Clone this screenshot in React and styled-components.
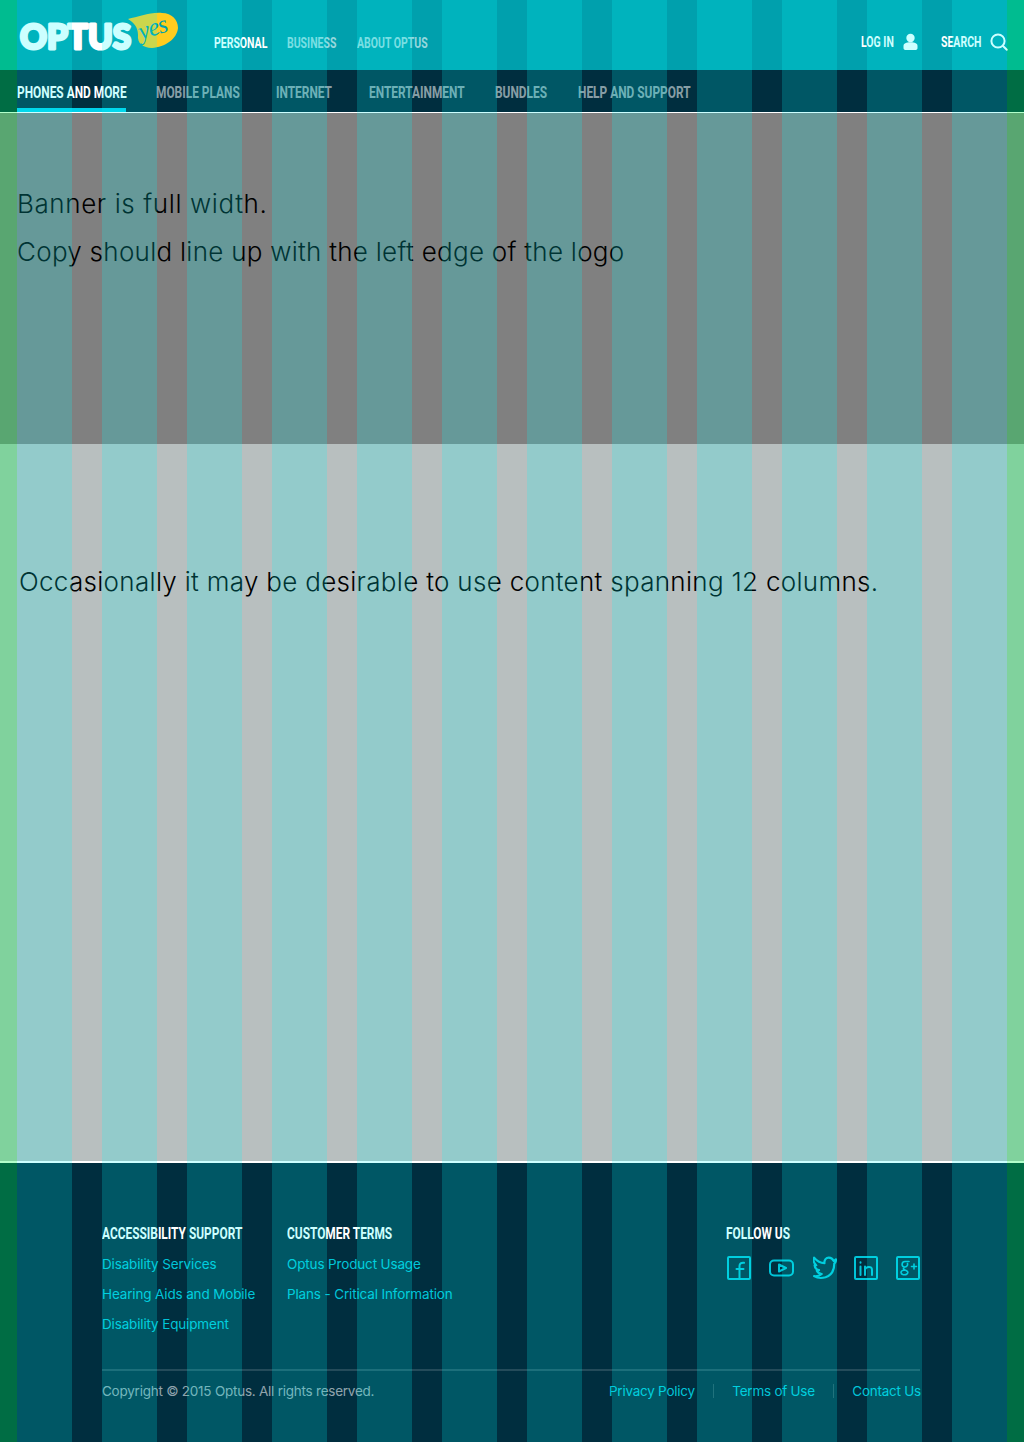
import React from "react";
import styled, { createGlobalStyle } from "styled-components";

const Global = createGlobalStyle`
  html, body { margin: 0; padding: 0; background: #b8bfbf; }
  * { box-sizing: border-box; }
`;
const label = `"Roboto", "Liberation Sans", sans-serif`;
const copy = `"Inter", "Noto Sans", "Liberation Sans", sans-serif`;

const Page = styled.div`
  position: relative;
  width: 1024px;
  height: 1442px;
  overflow: hidden;
  display: flex;
  flex-direction: column;
  color: #000;
`;
const Overlay = styled.div`
  position: absolute;
  inset: 0;
  display: flex;
  justify-content: space-between;
  pointer-events: none;
`;
const OuterMargin = styled.div`
  width: 17px;
  background: rgba(0, 255, 80, 0.3);
`;
const GridColumns = styled.div`
  display: grid;
  grid-template-columns: repeat(12, 55px);
  column-gap: 30px;
`;
const GridColumn = styled.div`
  background: rgba(0, 255, 255, 0.2);
`;
const Condensed = styled.span`
  display: inline-block;
  white-space: nowrap;
  transform: scaleX(0.7);
  transform-origin: 0 50%;
`;

const Header = styled.header`
  height: 70px;
  background: #00a0ad;
  display: flex;
  align-items: flex-start;
  padding-left: 17px;
`;
const Logo = styled.svg`
  width: 165px;
  height: 52px;
  margin-top: 9px;
  flex: none;
`;
const UtilNav = styled.nav`
  display: grid;
  grid-template-columns: 73px 70px 90px;
  margin: 34px 0 0 32px;
`;
const UtilLink = styled.a`
  font: 700 15px/18px ${label};
  color: ${(p) => (p.$active ? "#fff" : "rgba(255,255,255,.6)")};
`;
const Tools = styled.div`
  margin-left: auto;
  display: flex;
  align-items: center;
  padding: 30px 16px 0 0;
  height: 54px;
`;
const Tool = styled.a`
  font: 700 15px/18px ${label};
  color: #fff;
  display: flex;
  align-items: center;
  width: ${(p) => p.$w}px;
  justify-content: space-between;
  margin-left: ${(p) => p.$ml || 0}px;
`;
const ToolLabel = styled(Condensed)`
  width: 40px;
`;

const MainNav = styled.nav`
  height: 43px;
  background: #002e3f;
  border-bottom: 1px solid #fff;
  padding-left: 17px;
  display: grid;
  grid-template-columns: 139px 120px 93px 126px 83px 120px;
`;
const MainLink = styled.a`
  font: 700 17px/44px ${label};
  height: 42px;
  color: ${(p) => (p.$active ? "#fff" : "rgba(255,255,255,.55)")};
`;
const ActiveRule = styled.span`
  display: block;
  width: 109px;
  height: 4px;
  margin-top: -6px;
  position: relative;
  background: #00cfe8;
`;

const Banner = styled.section`
  height: 331px;
  background: #808080;
  padding: 67px 0 0 17px;
`;
const BannerLine = styled.p`
  margin: 0;
  font: 300 26px/48px ${copy};
  letter-spacing: ${(p) => p.$spacing}px;
`;
const Main = styled.main`
  height: 719px;
  padding: 118px 0 0 19px;
  border-bottom: 2px solid #fff;
`;
const MainLine = styled.p`
  margin: 0;
  font: 300 26px/40px ${copy};
  letter-spacing: 0.3px;
`;

const Footer = styled.footer`
  flex: 1;
  background: #002e3f;
  padding: 60px 104px 0 102px;
`;
const FooterCols = styled.div`
  display: grid;
  grid-template-columns: 185px 439px 1fr;
  height: 146px;
`;
const FooterHeading = styled.h4`
  margin: 0 0 6px;
  font: 700 17px/20px ${label};
  color: #fff;
`;
const FooterLink = styled.a`
  display: block;
  font: 400 13.5px/30px ${copy};
  letter-spacing: -0.15px;
  color: #00c4d8;
  white-space: nowrap;
`;
const Socials = styled.div`
  display: flex;
  justify-content: space-between;
  margin: 13px 0 0 1px;
`;
const Bottom = styled.div`
  border-top: 2px solid rgba(255, 255, 255, 0.14);
  display: flex;
  justify-content: space-between;
  padding-top: 6px;
`;
const Copyright = styled.span`
  font: 400 13.5px/28px ${copy};
  letter-spacing: -0.24px;
  color: rgba(255, 255, 255, 0.58);
`;
const Legal = styled.div`
  display: flex;
  width: 312px;
  margin-right: -1px;
  justify-content: space-between;
  align-items: center;
`;
const LegalLink = styled.a`
  font: 400 13.5px/28px ${copy};
  letter-spacing: -0.25px;
  color: #00c4d8;
  white-space: nowrap;
`;
const Separator = styled.span`
  width: 1px;
  height: 14px;
  background: rgba(255, 255, 255, 0.16);
`;

const Icon = styled.svg`
  width: ${(p) => p.$w || 24}px;
  height: ${(p) => p.$h || 24}px;
  fill: none;
  stroke: #00c4d8;
  stroke-width: 2;
  stroke-linecap: round;
  stroke-linejoin: round;
  flex: none;
`;

const cols = Array.from({ length: 12 });

export default function App() {
  return (
    <Page>
      <Global />
      <Header>
        <Logo viewBox="17 9 165 52">
          <path d="M128 19 C138 17 150 12 162 13 C172 13 178 20 178 28 C177 39 165 47 152 48 C143 48 137 43 138 35 C138 27 134 23 128 19 Z" fill="#ffcc1e" />
          <text x="141" y="40" fontFamily="Liberation Serif, serif" fontStyle="italic" fontSize="25" fill="#00a0ad" transform="rotate(-18 141 40)" textLength="30">yes</text>
          <text x="20" y="49" fontFamily="Lato, Inter, sans-serif" fontWeight="900" fontSize="34" fill="#fff" stroke="#fff" strokeWidth="3" strokeLinejoin="round" textLength="111" lengthAdjust="spacingAndGlyphs">OPTUS</text>
        </Logo>
        <UtilNav>
          <UtilLink $active><Condensed>PERSONAL</Condensed></UtilLink>
          <UtilLink><Condensed>BUSINESS</Condensed></UtilLink>
          <UtilLink><Condensed>ABOUT OPTUS</Condensed></UtilLink>
        </UtilNav>
        <Tools>
          <Tool $w={57}>
            <ToolLabel>LOG IN</ToolLabel>
            <svg width="15" height="18" viewBox="0 0 15 18" fill="#fff">
              <circle cx="7.5" cy="5" r="4.2" />
              <path d="M0.5 13 C0.5 10.5 3 9.3 7.5 9.3 C12 9.3 14.5 10.5 14.5 13 L14.5 15 C14.5 16.5 13.5 17 12 17 L3 17 C1.5 17 0.5 16.5 0.5 15 Z" />
            </svg>
          </Tool>
          <Tool $w={67} $ml={23}>
            <ToolLabel>SEARCH</ToolLabel>
            <svg width="18" height="18" viewBox="0 0 18 18" fill="none" stroke="#fff" strokeWidth="2" strokeLinecap="round">
              <circle cx="8" cy="8" r="6.6" />
              <path d="M13 13 L16.8 16.8" />
            </svg>
          </Tool>
        </Tools>
      </Header>
      <MainNav>
        <MainLink $active>
          <Condensed>PHONES AND MORE</Condensed>
          <ActiveRule />
        </MainLink>
        <MainLink><Condensed>MOBILE PLANS</Condensed></MainLink>
        <MainLink><Condensed>INTERNET</Condensed></MainLink>
        <MainLink><Condensed>ENTERTAINMENT</Condensed></MainLink>
        <MainLink><Condensed>BUNDLES</Condensed></MainLink>
        <MainLink><Condensed>HELP AND SUPPORT</Condensed></MainLink>
      </MainNav>
      <Banner>
        <BannerLine $spacing={0.6}>Banner is full width.</BannerLine>
        <BannerLine $spacing={0.27}>Copy should line up with the left edge of the logo</BannerLine>
      </Banner>
      <Main>
        <MainLine>Occasionally it may be desirable to use content spanning 12 columns.</MainLine>
      </Main>
      <Footer>
        <FooterCols>
          <div>
            <FooterHeading><Condensed>ACCESSIBILITY SUPPORT</Condensed></FooterHeading>
            <FooterLink>Disability Services</FooterLink>
            <FooterLink>Hearing Aids and Mobile</FooterLink>
            <FooterLink>Disability Equipment</FooterLink>
          </div>
          <div>
            <FooterHeading><Condensed>CUSTOMER TERMS</Condensed></FooterHeading>
            <FooterLink>Optus Product Usage</FooterLink>
            <FooterLink>Plans - Critical Information</FooterLink>
          </div>
          <div>
            <FooterHeading><Condensed>FOLLOW US</Condensed></FooterHeading>
            <Socials>
              <Icon viewBox="0 0 24 24">
                <rect x="1" y="1" width="22" height="22" rx="1" />
                <path d="M12.5 23 L12.5 10 C12.5 7.5 14 6.5 17 6.8 M9.5 13 L16.5 13" />
              </Icon>
              <Icon viewBox="0 0 26 24" $w={26}>
                <rect x="1" y="4.5" width="23" height="15" rx="4" />
                <path d="M10 8.5 L17 12 L10 15.5 Z" />
              </Icon>
              <Icon viewBox="1 2 22 22">
                <path d="M22 5 C21 5.8 20.5 6.2 20 6.5 C19 4.5 17.5 3.5 15.5 3.5 C13 3.5 11.2 5.5 11.5 8.5 C8 8.5 4.5 6.5 2 3.5 C1 6 2 9 4 10.5 L2.5 10.5 C2.8 13 4.5 14.5 6.5 15 L4.5 15.5 C5.5 17.5 7 18.3 9 18.5 C7 20.2 4.5 20.8 2 20.5 C5 22.3 9 22.5 12.5 21.5 C17.5 19.8 20.5 15 20.5 9 C21.5 8 22.3 6.5 22 5 Z" />
              </Icon>
              <Icon viewBox="0 0 24 24">
                <rect x="1" y="1" width="22" height="22" rx="1" />
                <path d="M6.5 10.5 L6.5 19 M6.5 6.3 L6.5 6.8 M11 19 L11 10.5 M11 13.5 C12 10.5 18 9.5 18 14 L18 19" />
              </Icon>
              <Icon viewBox="0 0 24 24">
                <rect x="1" y="1" width="22" height="22" rx="1" />
                <path d="M13 5.5 L9 5.5 C5.5 5.5 5 10.5 8.5 11 C10.5 11.2 12 9.5 11.5 7.5 M8 11.5 C7 12.5 7.5 13.5 9 14 C12 15 12.5 16.5 11 18 C9 19.5 5 18.8 5 16.5 C5 15 6.5 14.3 9 14 M15.5 10.5 L20.5 10.5 M18 8 L18 13" strokeWidth="1.6" />
              </Icon>
            </Socials>
          </div>
        </FooterCols>
        <Bottom>
          <Copyright>Copyright © 2015 Optus. All rights reserved.</Copyright>
          <Legal>
            <LegalLink>Privacy Policy</LegalLink>
            <Separator />
            <LegalLink>Terms of Use</LegalLink>
            <Separator />
            <LegalLink>Contact Us</LegalLink>
          </Legal>
        </Bottom>
      </Footer>
      <Overlay>
        <OuterMargin />
        <GridColumns>
          {cols.map((_, i) => (
            <GridColumn key={i} />
          ))}
        </GridColumns>
        <OuterMargin />
      </Overlay>
    </Page>
  );
}
